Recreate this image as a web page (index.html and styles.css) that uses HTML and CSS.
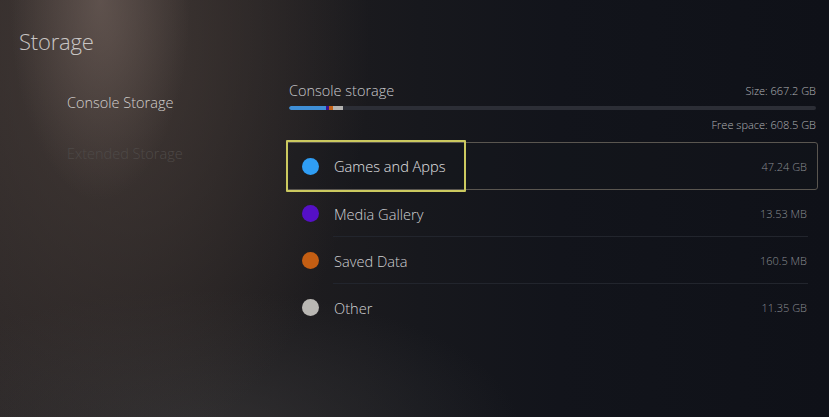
FILE: index.html
```html
<!DOCTYPE html>
<html lang="en">
<head>
<meta charset="utf-8">
<title>Storage</title>
<link rel="stylesheet" href="styles.css">
</head>
<body>
<div class="page">
  <h1 class="title">Storage</h1>
  <div class="layout">
    <nav class="side">
      <div class="side-item active">Console Storage</div>
      <div class="side-item dim">Extended Storage</div>
    </nav>
    <main class="panel">
      <div class="head">
        <span class="head-title">Console storage</span>
        <span class="head-size">Size: 667.2 GB</span>
      </div>
      <div class="bar">
        <span class="seg seg-games" style="width:37px"></span>
        <span class="seg seg-media" style="width:3px"></span>
        <span class="seg seg-saved" style="width:4px"></span>
        <span class="seg seg-other" style="width:10px"></span>
      </div>
      <div class="free">Free space: 608.5 GB</div>
      <ul class="list">
        <li class="row selected">
          <span class="focus"></span>
          <span class="dot dot-games"></span>
          <span class="label">Games and Apps</span>
          <span class="value">47.24 GB</span>
        </li>
        <li class="row">
          <span class="dot dot-media"></span>
          <span class="label">Media Gallery</span>
          <span class="value">13.53 MB</span>
        </li>
        <li class="row">
          <span class="dot dot-saved"></span>
          <span class="label">Saved Data</span>
          <span class="value">160.5 MB</span>
        </li>
        <li class="row last">
          <span class="dot dot-other"></span>
          <span class="label">Other</span>
          <span class="value">11.35 GB</span>
        </li>
      </ul>
    </main>
  </div>
</div>
</body>
</html>
```

FILE: styles.css
```css
html, body {
  margin: 0;
  padding: 0;
}
body {
  width: 829px;
  height: 417px;
  overflow: hidden;
  font-family: "Open Sans", "Noto Sans", sans-serif;
  font-weight: 300;
  color: #d8d6d4;
  background:
    radial-gradient(ellipse 90px 200px at 100px 0px, rgba(120,104,98,0.55), rgba(120,104,98,0) 100%),
    radial-gradient(ellipse 260px 420px at 110px 40px, rgba(70,60,56,0.85), rgba(60,52,48,0) 100%),
    radial-gradient(ellipse 320px 140px at 200px 430px, rgba(60,60,62,0.55), rgba(60,60,62,0) 100%),
    linear-gradient(90deg, #2c2727 0px, #221f20 220px, #17181d 420px, #12141b 560px, #0f1118 829px);
}
.page {
  height: 417px;
  box-sizing: border-box;
  padding-top: 27px;
}
.title {
  margin: 0 0 0 19px;
  font-size: 22px;
  line-height: 28px;
  font-weight: 300;
  color: #c9c6c4;
  letter-spacing: -0.2px;
}
.layout {
  display: flex;
  margin-top: 25px;
}
.side {
  width: 219px;
  padding-left: 67px;
  padding-top: 13px;
  display: flex;
  flex-direction: column;
  gap: 31px;
}
.side-item {
  font-size: 14.5px;
  line-height: 20px;
  white-space: nowrap;
}
.side-item.active {
  color: #d2cecc;
}
.side-item.dim {
  color: #4e4947;
}
.panel {
  width: 532px;
}
.head {
  display: flex;
  justify-content: space-between;
  align-items: center;
  padding: 0 2px 0 3px;
  height: 20px;
}
.head-title {
  font-size: 14.5px;
  color: #c8c8cc;
}
.head-size, .free {
  font-size: 11px;
  color: #b2b2b6;
}
.bar {
  margin: 6px 2px 0 3px;
  height: 4px;
  border-radius: 2px;
  background: #2c2e36;
  display: flex;
  overflow: hidden;
}
.seg { height: 100%; display: block; }
.seg-games { background: #3f8fd6; border-radius: 2px 0 0 2px; }
.seg-media { background: #3a1290; }
.seg-saved { background: #c46218; }
.seg-other { background: #b3b2b0; }
.free {
  text-align: right;
  padding-right: 2px;
  margin-top: 6px;
  line-height: 18px;
}
.list {
  list-style: none;
  margin: 8px 0 0 0;
  padding: 0;
}
.row {
  position: relative;
  box-sizing: border-box;
  display: flex;
  align-items: center;
  height: 47px;
  padding: 0 10px 0 15px;
  border: 1px solid transparent;
}
.row::after {
  content: "";
  position: absolute;
  left: 46px;
  right: 9px;
  bottom: -1px;
  height: 1px;
  background: #22252d;
}
.row.last::after { display: none; }
.row.selected {
  height: 48px;
  border: 1px solid #5a5650;
  border-radius: 3px;
  background: rgba(20,22,30,0.35);
}
.row.selected::after { display: none; }
.focus {
  position: absolute;
  left: -1px;
  top: -3px;
  width: 176px;
  height: 48px;
  border: 2px solid #cbc95f;
  border-radius: 1px;
}
.dot {
  width: 17px;
  height: 17px;
  border-radius: 50%;
  flex: none;
}
.dot-games { background: #2f9ef5; }
.dot-media { background: #5510c6; }
.dot-saved { background: #c35e13; }
.dot-other { background: #b9b7b3; }
.label {
  margin-left: 15px;
  font-size: 14.6px;
  color: #e2e2e4;
  flex: 1;
}
.row:not(.selected) .label { color: #cfcfd2; }
.value {
  font-size: 11px;
  color: #8b8d93;
}
```
